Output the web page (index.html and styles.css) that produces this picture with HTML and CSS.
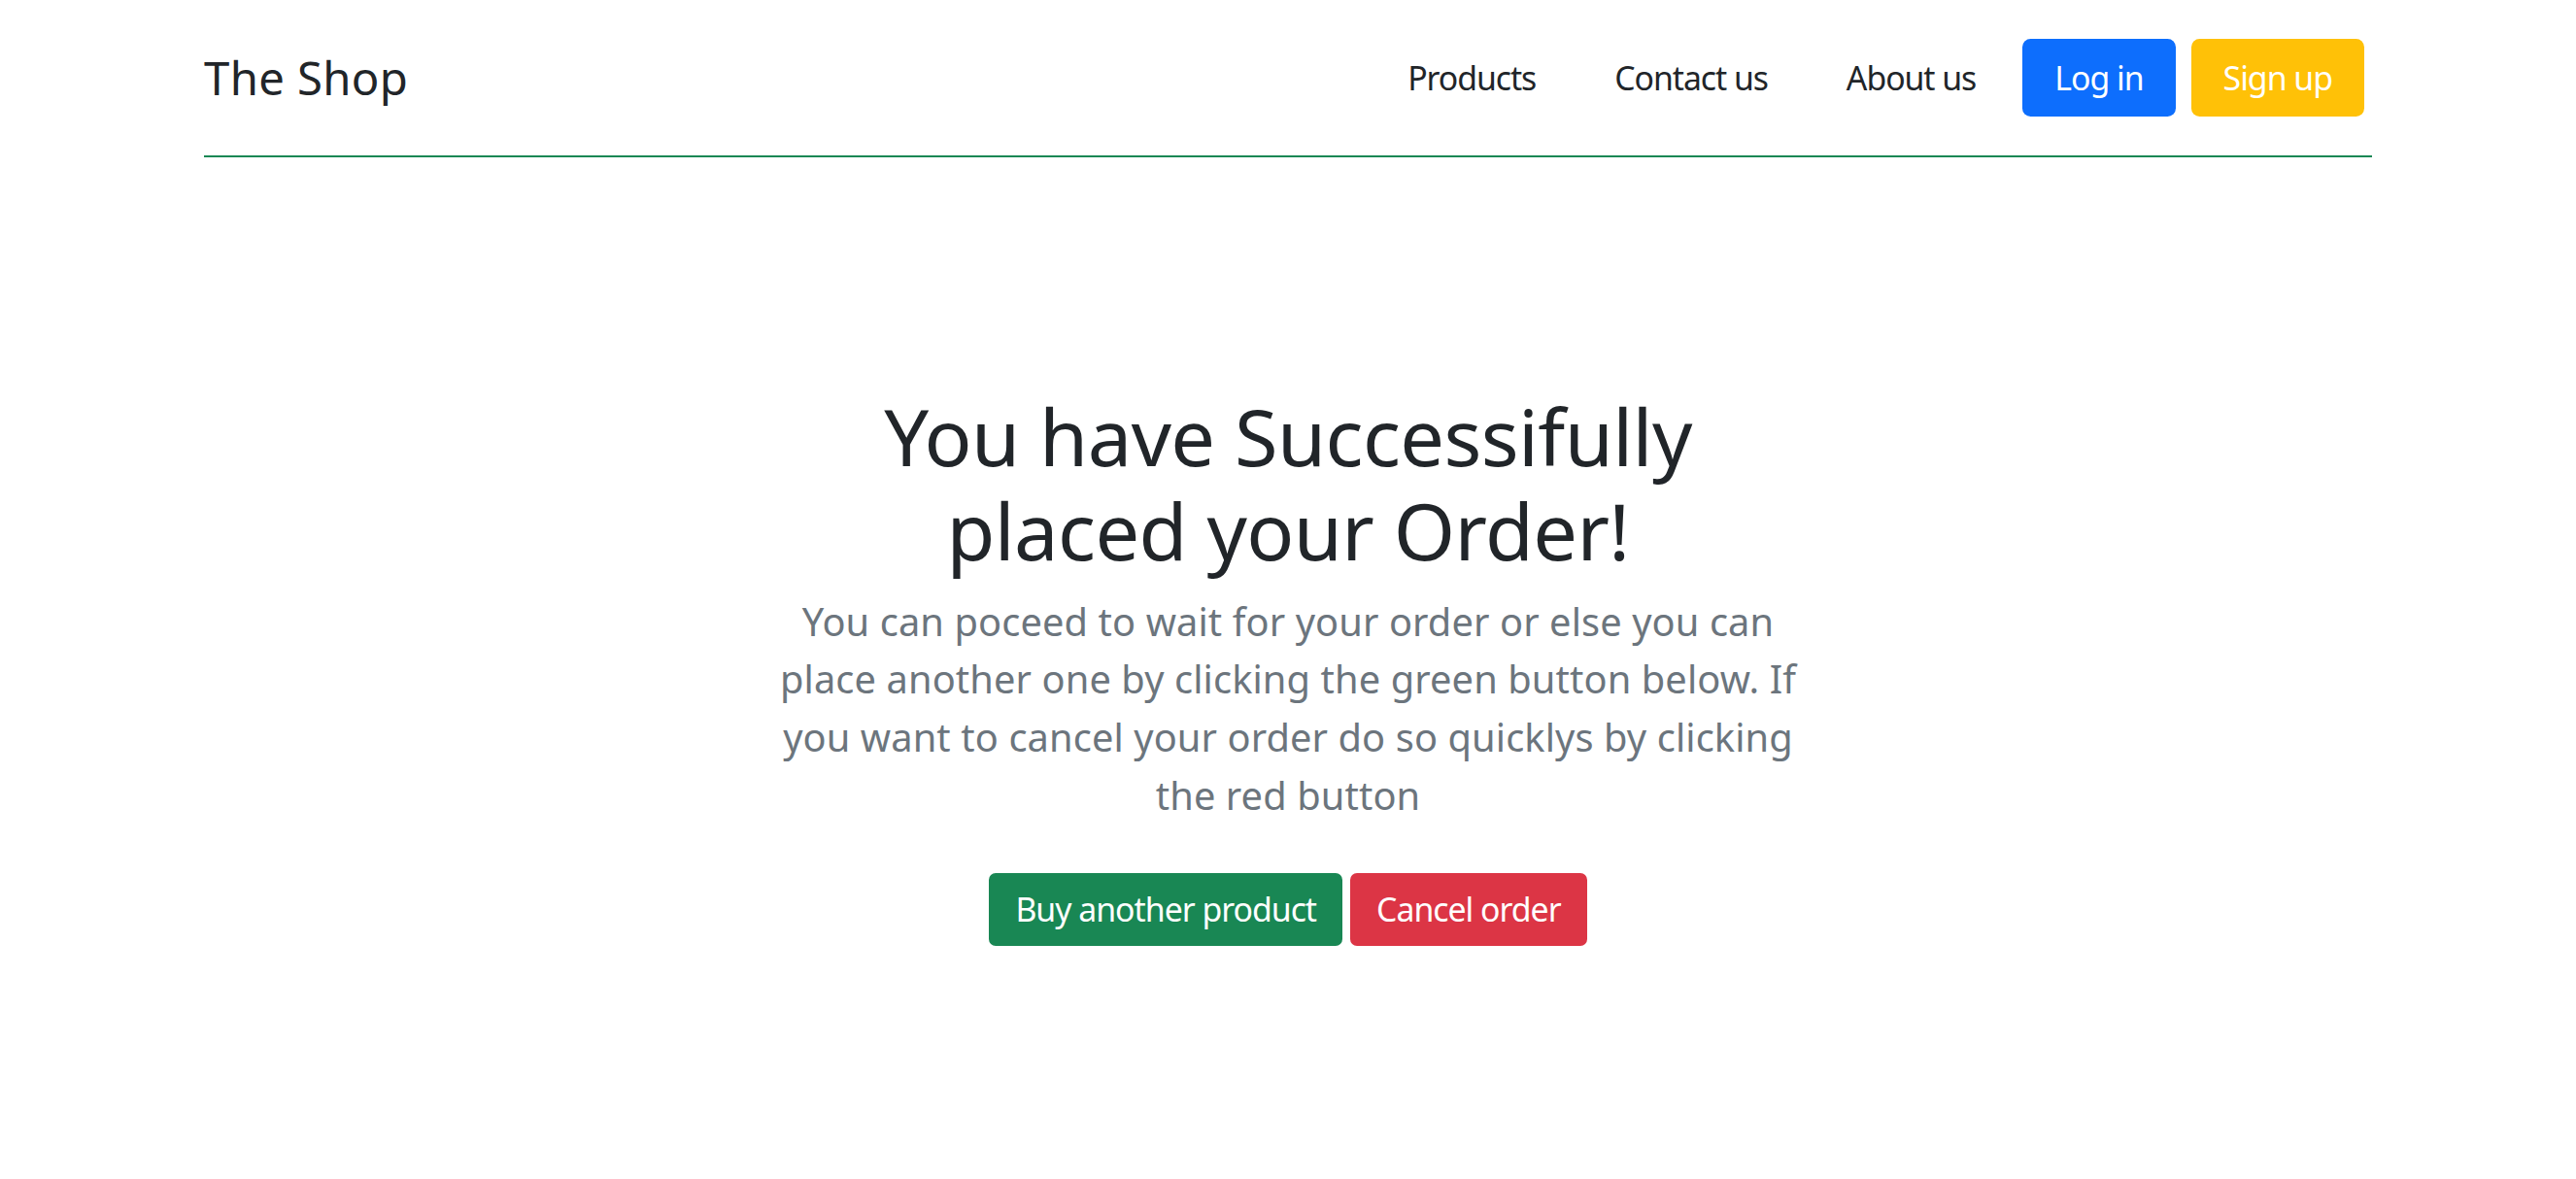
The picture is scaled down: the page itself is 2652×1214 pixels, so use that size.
FILE: index.html
```html
<!DOCTYPE html>
<html lang="en">
<head>
<meta charset="utf-8">
<title>The Shop</title>
<link rel="stylesheet" href="styles.css">
</head>
<body>
<div class="container">
  <header class="site-header">
    <a class="brand" href="#">The Shop</a>
    <nav class="nav">
      <ul class="nav-links">
        <li><a class="nav-link" href="#">Products</a></li>
        <li><a class="nav-link" href="#">Contact us</a></li>
        <li><a class="nav-link" href="#">About us</a></li>
      </ul>
      <div class="nav-actions">
        <a class="btn btn-lg btn-primary" href="#">Log in</a>
        <a class="btn btn-lg btn-warning" href="#">Sign up</a>
      </div>
    </nav>
  </header>

  <main class="hero">
    <div class="hero-col">
      <h1 class="hero-title">You have Successifully placed your Order!</h1>
      <p class="hero-lead">You can poceed to wait for your order or else you can place another one by clicking the green button below. If you want to cancel your order do so quicklys by clicking the red button</p>
      <div class="hero-actions">
        <a class="btn btn-success" href="#">Buy another product</a>
        <a class="btn btn-danger" href="#">Cancel order</a>
      </div>
    </div>
  </main>
</div>
</body>
</html>
```

FILE: styles.css
```css
* {
  box-sizing: border-box;
}

html, body {
  margin: 0;
  padding: 0;
  background: #ffffff;
}

body {
  font-family: "Noto Sans", "Open Sans", sans-serif;
  color: #212529;
  font-size: 27px;
  line-height: 1.5;
}

a {
  text-decoration: none;
}

.container {
  width: 2232px;
  margin: 0 auto;
}

/* Header */
.site-header {
  display: flex;
  align-items: center;
  justify-content: space-between;
  padding: 40px 0;
  border-bottom: 2px solid #198754;
}

.brand {
  font-size: 47.3px;
  line-height: 1.2;
  letter-spacing: 0.35px;
  color: #212529;
}

.nav {
  display: flex;
  align-items: center;
  margin-right: 8px;
}

.nav-links {
  display: flex;
  align-items: center;
  list-style: none;
  margin: 0;
  padding: 0;
}

.nav-link {
  display: block;
  font-size: 33.8px;
  line-height: 1.5;
  letter-spacing: -1.05px;
  color: #212529;
  padding: 8px 40.5px;
}

.nav-links li:last-child .nav-link {
  padding-right: 0;
}

.nav-actions {
  display: flex;
  gap: 16px;
  margin-left: 48px;
}

/* Buttons */
.btn {
  display: inline-block;
  color: #ffffff;
  font-size: 33.8px;
  line-height: 1.5;
  letter-spacing: -1px;
  padding: 12.5px 27px;
  border-radius: 7px;
  text-align: center;
  white-space: nowrap;
}

.btn-lg {
  padding: 14.6px 33px;
  border-radius: 8.5px;
}

.btn-primary { background: #0d6efd; }
.btn-warning { background: #ffc107; }
.btn-success { background: #198754; }
.btn-danger  { background: #dc3545; }

/* Hero */
.hero {
  padding-top: 238px;
  text-align: center;
}

.hero-col {
  width: 1076px;
  margin: 0 auto;
}

.hero-title {
  margin: 0 0 15px;
  font-size: 81.2px;
  font-weight: 400;
  line-height: 1.2;
  letter-spacing: -0.6px;
  color: #212529;
}

.hero-lead {
  margin: 0;
  font-size: 39.8px;
  line-height: 59.7px;
  letter-spacing: 0.1px;
  color: #6c757d;
}

.hero-actions {
  display: flex;
  justify-content: center;
  gap: 8px;
  margin-top: 50px;
}
```
